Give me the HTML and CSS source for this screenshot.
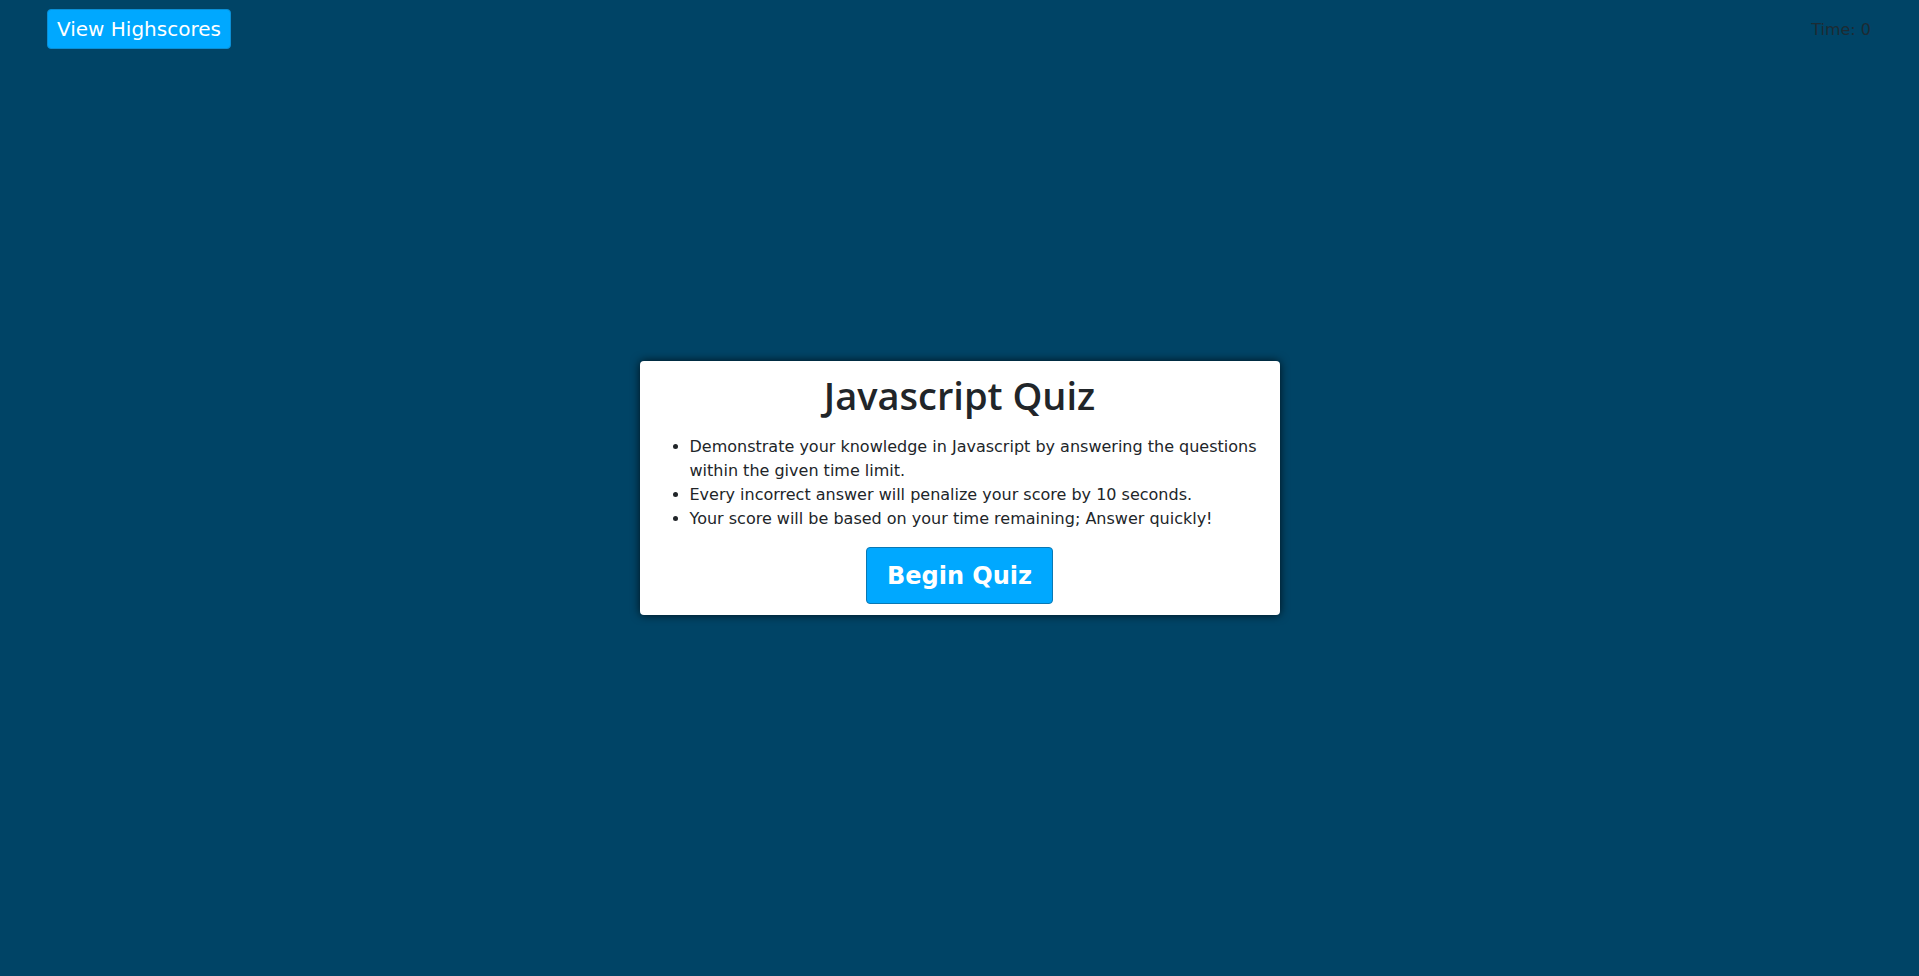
FILE: index.html
```html
<!DOCTYPE html>
<html lang="en">
<head>
<meta charset="utf-8">
<title>Javascript Quiz</title>
<link rel="stylesheet" href="styles.css">
</head>
<body>
<div class="page">
  <header class="topbar">
    <button class="btn btn-scores">View Highscores</button>
    <div class="timer">Time: 0</div>
  </header>
  <main class="stage">
    <section class="card">
      <h1 class="card-title">Javascript Quiz</h1>
      <ul class="rules">
        <li>Demonstrate your knowledge in Javascript by answering the questions within the given time limit.</li>
        <li>Every incorrect answer will penalize your score by 10 seconds.</li>
        <li>Your score will be based on your time remaining; Answer quickly!</li>
      </ul>
      <div class="actions">
        <button class="btn btn-begin">Begin Quiz</button>
      </div>
    </section>
  </main>
  <div class="spacer"></div>
</div>
</body>
</html>
```
FILE: styles.css
```css
html, body {
  margin: 0;
  padding: 0;
  height: 100%;
}
body {
  background: #004466;
  font-family: "DejaVu Sans", Verdana, sans-serif;
  color: #212529;
  overflow: hidden;
}
.page {
  height: 100vh;
  display: grid;
  grid-template-rows: 58px 1fr 58px;
}
.topbar {
  display: flex;
  justify-content: space-between;
  align-items: center;
  padding: 9px 48px 9px 47px;
}
.btn {
  font-family: "DejaVu Sans", Verdana, sans-serif;
  background: #00a8ff;
  color: #fff;
  border: 1px solid #0a8fd6;
  border-radius: 4px;
  cursor: pointer;
}
.btn-scores {
  height: 40px;
  padding: 0 9px;
  font-size: 20px;
}
.timer {
  font-size: 16px;
  color: #1d2b33;
}
.stage {
  display: flex;
  align-items: center;
  justify-content: center;
}
.card {
  width: 640px;
  box-sizing: border-box;
  background: #fff;
  border-radius: 4px;
  padding: 10px 10px 11px;
  box-shadow: 0 0 10px rgba(0, 0, 0, 0.75);
}
.card-title {
  margin: 0;
  text-align: center;
  font-family: "Open Sans", "Noto Sans", sans-serif;
  font-weight: 600;
  font-size: 38px;
  line-height: 48px;
  color: #212529;
}
.rules {
  margin: 16px 0;
  padding-left: 40px;
  font-size: 16px;
  line-height: 24px;
}
.actions {
  display: flex;
  justify-content: center;
}
.btn-begin {
  height: 57px;
  padding: 0 20px;
  font-size: 24px;
  font-weight: bold;
  border-color: #0a78b4;
}
```
